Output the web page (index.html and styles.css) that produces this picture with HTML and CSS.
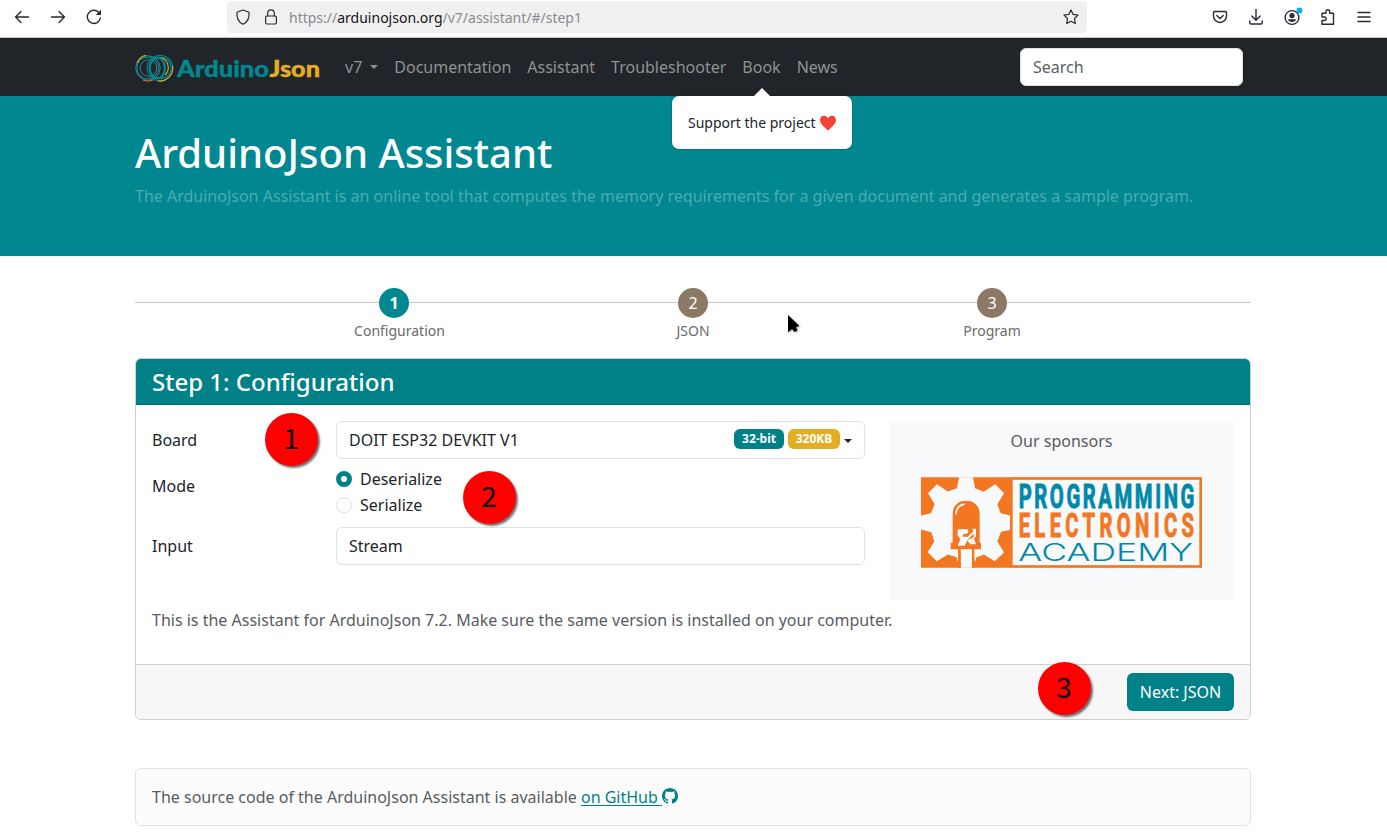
FILE: index.html
```html
<!DOCTYPE html>
<html lang="en">
<head>
<meta charset="utf-8">
<title>ArduinoJson Assistant</title>
<link rel="stylesheet" href="styles.css">
</head>
<body>
<div class="browser">
  <div class="browser-nav">
    <svg class="icon" viewBox="0 0 16 16"><path d="M14.5 8H1.5M7 2.5L1.5 8L7 13.5"/></svg>
    <svg class="icon" viewBox="0 0 16 16"><path d="M1.5 8H14.5M9 2.5L14.5 8L9 13.5"/></svg>
    <svg class="icon" viewBox="0 0 16 16"><path d="M12.600 3.200A6.600 6.600 0 1 0 14.400 9"/><path class="tip" d="M15 .8V6H9.800Z"/></svg>
  </div>
  <div class="urlbar">
    <svg class="icon shield" viewBox="0 0 16 16"><path d="M8 1L14 3.200C14.600 8.500 12.500 13 8 15.300C3.500 13 1.400 8.500 2 3.200Z"/></svg>
    <svg class="icon lock" viewBox="0 0 16 16"><rect x="2.600" y="7" width="10.800" height="8" rx="1.200"/><path d="M4.700 7V4.200A3.300 3.300 0 0 1 11.300 4.200V7"/></svg>
    <span class="url">https://<b>arduinojson.org</b>/v7/assistant/#/step1</span>
    <svg class="icon star" viewBox="0 0 16 16"><path d="M8 1L10.100 5.300L15 6L11.500 9.500L12.300 14.500L8 12.200L3.700 14.500L4.500 9.500L1 6L5.900 5.300Z"/></svg>
  </div>
  <div class="browser-tools">
    <svg class="icon" viewBox="0 0 16 16"><path d="M2.700 2.500H13.300Q14.500 2.500 14.500 3.700V7A6.500 6.500 0 0 1 1.500 7V3.700Q1.500 2.500 2.700 2.500ZM4.800 6.500L8 9.500L11.200 6.500"/></svg>
    <svg class="icon" viewBox="0 0 16 16"><path d="M8 .5V11M3.800 7L8 11.200L12.200 7M1.700 12V13.500Q1.700 15 3.200 15H12.800Q14.300 15 14.300 13.500V12"/></svg>
    <svg class="icon account" viewBox="0 0 16 16"><circle cx="8" cy="8.500" r="6.900"/><circle class="solid" cx="8" cy="6.600" r="2.600"/><path class="solid" d="M4 10.300H12Q11.400 13 8 13Q4.600 13 4 10.300Z"/><circle class="dot" cx="15.500" cy="1.500" r="3"/></svg>
    <svg class="icon" viewBox="0 0 16 16"><path d="M2 15.300V11.500H4.500A1.700 1.700 0 0 0 4.500 8H2V4.300H6V2.500A1.800 1.800 0 0 1 9.600 2.500V4.300H13.500V15.300Z"/></svg>
    <svg class="icon" viewBox="0 0 16 16"><path d="M2 3.500H14M2 8H14M2 12.500H14"/></svg>
  </div>
</div>

<nav class="navbar">
  <svg class="brand" viewBox="0 0 186 32">
    <g class="rings">
      <circle class="sky" cx="13" cy="16" r="12.200"/>
      <circle class="teal" cx="12.800" cy="16" r="10.800"/>
      <circle class="sky" cx="13.500" cy="16" r="8.300"/>
      <path class="gold" d="M2 11Q4.500 4.500 11 3.200"/>
      <path class="red" d="M8 28Q13 30 18 28"/>
      <circle class="teal" cx="25" cy="16" r="12.800"/>
      <circle class="teal" cx="25.500" cy="16" r="10.600"/>
      <path class="gold" d="M24 5.500A9.500 10 0 0 1 30 23M37.500 14A13 13 0 0 1 23 29"/>
      <ellipse class="teal wide" cx="22.300" cy="16" rx="7.600" ry="10.500"/>
    </g>
    <text class="brand-a" x="42" y="24.500" textLength="92" lengthAdjust="spacingAndGlyphs">Arduino</text>
    <text class="brand-j" x="134.500" y="24.500" textLength="50.500" lengthAdjust="spacingAndGlyphs">Json</text>
  </svg>
  <div class="links">
    <span class="dropdown">v7</span>
    <span>Documentation</span>
    <span>Assistant</span>
    <span>Troubleshooter</span>
    <span class="book">Book
      <span class="popover">Support the project
        <svg class="heart" viewBox="0 0 16 16"><path d="M8 15.500C5 12.800 0 9 0 5C0 0 6 -.8 8 3.200C10 -.8 16 0 16 5C16 9 11 12.800 8 15.500Z"/></svg>
      </span>
    </span>
    <span>News</span>
  </div>
  <div class="search">Search</div>
</nav>

<header class="hero">
  <h1>ArduinoJson Assistant</h1>
  <p>The ArduinoJson Assistant is an online tool that computes the memory requirements for a given document and generates a sample program.</p>
</header>

<main class="container">
  <div class="steps">
    <div class="step active"><span class="num">1</span><span class="name">Configuration</span></div>
    <div class="step"><span class="num">2</span><span class="name">JSON</span></div>
    <div class="step"><span class="num">3</span><span class="name">Program</span></div>
  </div>

  <section class="card">
    <h4>Step 1: Configuration</h4>
    <div class="card-body">
      <div class="columns">
        <div class="form">
          <label>Board</label>
          <div class="control">DOIT ESP32 DEVKIT V1
            <span class="tags"><span class="badge">32-bit</span><span class="badge amber">320KB</span><i class="caret"></i></span>
          </div>
          <label>Mode</label>
          <div class="radios">
            <div><i class="radio on"></i>Deserialize</div>
            <div><i class="radio"></i>Serialize</div>
          </div>
          <label>Input</label>
          <div class="control">Stream</div>
        </div>
        <aside class="sponsors">
          <span>Our sponsors</span>
          <svg class="sponsor-logo" viewBox="63 201 843 272">
            <path class="orange" d="M63 201H334V473H63Z"/>
            <path class="paper" d="M177 201H219L225 234L251 245L286 222L312 249L292 282L302 309L334 317V359L303 365L292 394L312 427L284 453L252 433L229 442L225 456L216 418V473H182V418L174 457L170 441L144 433L110 453L83 426L103 394L94 366L63 358V316L93 309L104 282L84 249L111 222L143 244L171 234Z"/>
            <path class="orange" d="M158 398V313C158 287 174 272 198 272C222 272 239 287 239 313V398H243V417H152V398ZM174 410H182V473H174ZM216 410H223V473H216Z"/>
            <path class="paper" d="M173 357H205V369L188 374V380H203L217 365V356H228V379L222 385L228 402H211L202 391L194 407H173L181 387L173 377Z"/>
            <path class="orange" d="M205 357H218V365L202 380L190 373L205 369ZM202 390L221 370V381Z"/>
            <path class="shine" d="M168 313C168 296 176 285 194 282"/>
            <rect class="frame" x="334" y="205" width="568" height="264"/>
            <text class="l1" transform="translate(356 292) scale(.62 1)" textLength="850">PROGRAMMING</text>
            <text class="l2" transform="translate(356 380) scale(.62 1)" textLength="848">ELECTRONICS</text>
            <text class="l3" x="355" y="452" textLength="524" lengthAdjust="spacingAndGlyphs">ACADEMY</text>
          </svg>
        </aside>
      </div>
      <p class="note">This is the Assistant for ArduinoJson 7.2. Make sure the same version is installed on your computer.</p>
    </div>
    <div class="card-footer"><span class="button">Next: JSON</span></div>
    <span class="marker m1">1</span>
    <span class="marker m2">2</span>
    <span class="marker m3">3</span>
  </section>

  <footer class="source">The source code of the ArduinoJson Assistant is available <a>on GitHub </a><svg class="github" viewBox="0 0 16 16"><path d="M8 0C3.580 0 0 3.580 0 8c0 3.540 2.290 6.530 5.470 7.590.4.070.55-.17.55-.38 0-.19-.01-.82-.01-1.490-2.010.37-2.530-.49-2.690-.94-.09-.23-.48-.94-.82-1.130-.28-.15-.68-.52-.01-.53.63-.01 1.080.58 1.230.82.72 1.210 1.870.87 2.330.66.07-.52.28-.87.51-1.070-1.780-.2-3.640-.89-3.640-3.950 0-.87.31-1.590.82-2.150-.08-.2-.36-1.020.08-2.120 0 0 .67-.21 2.200.82.64-.18 1.320-.27 2-.27s1.360.09 2 .27c1.530-1.040 2.200-.82 2.200-.82.44 1.100.16 1.920.08 2.120.51.56.82 1.270.82 2.150 0 3.070-1.870 3.750-3.650 3.950.29.25.54.73.54 1.480 0 1.070-.01 1.930-.01 2.200 0 .21.15.46.55.38A8 8 0 0 0 16 8c0-4.420-3.580-8-8-8z"/></svg></footer>
</main>
<svg class="cursor" viewBox="0 0 14 22"><path d="M1 1V18.500L5 15L7.500 18L10.500 16.500L9 13L12.500 12Z"/></svg>
</body>
</html>
```
FILE: styles.css
```css
* { box-sizing: border-box; }
body {
  margin: 0;
  height: 838px;
  overflow: hidden;
  background: #fff;
  color: #212529;
  font: 16px/24px "Noto Sans", sans-serif;
}
p, h1, h4 { margin: 0; }

.browser {
  display: flex;
  height: 38px;
  border-bottom: 1px solid #c4c4c6;
}
.icon {
  width: 16px;
  height: 16px;
  overflow: visible;
  fill: none;
  stroke: #2b2a33;
  stroke-width: 1.4;
  stroke-linejoin: round;
  stroke-linecap: round;
}
.icon .solid { fill: #2b2a33; }
.icon .tip { fill: #2b2a33; stroke: none; }
.account .solid { stroke: none; }
.dot { fill: #00b3f4; stroke: none; }
.browser-nav {
  display: flex;
  gap: 20px;
  width: 227px;
  padding: 9px 0 0 14px;
}
.urlbar {
  display: flex;
  align-items: center;
  width: 860px;
  height: 32px;
  margin-top: 1px;
  padding: 0 8px;
  border-radius: 4px;
  background: #f0f0f0;
}
.shield, .lock, .star { stroke-width: 1.200; }
.lock { margin: 0 10px 0 12px; }
.url { padding-top: 2px; color: #8b8b8f; font-size: 14px; }
.url b { color: #15141a; font-weight: 400; }
.star { margin-left: auto; }
.browser-tools {
  display: flex;
  gap: 20px;
  padding: 9px 0 0 125px;
}

.navbar {
  display: flex;
  align-items: center;
  height: 58px;
  padding: 0 144px 0 135px;
  background: #212529;
  color: #909294;
}
.brand { width: 186px; height: 32px; margin-top: 2px; }
.rings { fill: none; stroke-width: 1.100; }
.teal { stroke: #00878f; }
.wide { stroke-width: 2.200; }
.sky { stroke: #4f93a1; stroke-width: .8; }
.gold { stroke: #e5ad24; }
.red { stroke: #e47128; }
.brand text { font: 900 22px Lato, sans-serif; stroke-width: .4; }
.brand-a { fill: #00878f; stroke: #00878f; }
.brand-j { fill: #e5ad24; stroke: #e5ad24; }
.links { display: flex; gap: 16px; margin-left: 24px; }
.dropdown::after {
  content: "";
  display: inline-block;
  margin-left: 8px;
  vertical-align: 4px;
  border: 4.500px solid transparent;
  border-top-color: currentColor;
  border-bottom: 0;
}
.book { position: relative; }
.popover {
  position: absolute;
  top: 41px;
  left: 50%;
  z-index: 2;
  display: flex;
  align-items: center;
  gap: 4px;
  width: 180px;
  height: 53px;
  padding: 0 15px 0 16.500px;
  transform: translateX(-50%);
  border-radius: 7px;
  background: #fff;
  box-shadow: 0 0 0 1px rgba(0, 0, 0, .12);
  color: #212529;
  font-size: 14px;
  white-space: nowrap;
}
.popover::before {
  content: "";
  position: absolute;
  top: -8px;
  left: calc(50% - 8px);
  border: 8px solid transparent;
  border-top: 0;
  border-bottom-color: #fff;
}
.heart { width: 16px; height: 16px; fill: #f44336; }
.search {
  width: 223px;
  height: 38px;
  margin-left: auto;
  padding: 6px 12px;
  border: 1px solid #dee2e6;
  border-radius: 6px;
  background: #fff;
  color: #5a5e62;
}

.hero {
  height: 160px;
  padding: 33px 135px 0;
  background: #00878f;
  color: #fff;
}
.hero h1 { margin-bottom: 7px; font-size: 40px; font-weight: 500; line-height: 48px; }
.hero p { color: #4dabb1; white-space: nowrap; }

.container { width: 1116px; margin-left: 135px; }
.steps {
  display: grid;
  grid-template-columns: repeat(3, 299px);
  justify-content: center;
  height: 102px;
  padding-top: 32px;
  background: linear-gradient(#c8c8c8, #c8c8c8) 0 46px / 100% 1px no-repeat;
}
.step { display: flex; flex-direction: column; align-items: center; }
.num {
  width: 30px;
  height: 30px;
  border-radius: 50%;
  background: #8c7965;
  color: #fff;
  line-height: 30px;
  text-align: center;
}
.name { margin-top: 2px; color: #6b6b6b; font-size: 14px; line-height: 21px; }
.active .num { background: #00878f; font-weight: 700; }
.active .name { margin-left: 11px; }

.card {
  position: relative;
  height: 362px;
  border: 1px solid #cfcfcf;
  border-radius: 6px;
  display: flex;
  flex-direction: column;
}
.card h4 {
  height: 46px;
  padding: 8px 16px;
  border-bottom: 1px solid #006f74;
  border-radius: 5px 5px 0 0;
  background: #008187;
  color: #fff;
  font-size: 24px;
  font-weight: 500;
  line-height: 29px;
}
.card-body { flex: 1; padding: 16px 16px 0; }
.columns { display: flex; justify-content: space-between; }
.form {
  display: grid;
  grid-template-columns: 184px 529px;
  row-gap: 8px;
  align-content: start;
}
.form label { padding-top: 7px; }
.control {
  display: flex;
  justify-content: space-between;
  height: 38px;
  padding: 6px 12px;
  border: 1px solid #dee2e6;
  border-radius: 6px;
}
.tags { display: flex; align-items: center; gap: 4px; margin-top: -3px; }
.badge {
  width: 50px;
  height: 20px;
  border-radius: 6px;
  background: #008187;
  color: #fff;
  font-size: 12px;
  font-weight: 700;
  line-height: 20px;
  text-align: center;
}
.amber { width: 52px; background: #e5ad24; }
.caret {
  margin-top: 4px;
  border: 4px solid transparent;
  border-top-color: #212529;
  border-bottom: 0;
}
.radios { height: 52px; }
.radios div { display: flex; align-items: center; gap: 8px; height: 26px; }
.radios div:first-child { height: 24px; margin-bottom: 1px; }
.radio {
  width: 16px;
  height: 16px;
  border: 1px solid #dee2e6;
  border-radius: 50%;
}
.radio.on { border: 5px solid #008187; }
.sponsors {
  display: flex;
  flex-direction: column;
  align-items: center;
  gap: 24px;
  width: 345px;
  height: 179px;
  padding-top: 8px;
  background: #f8f9fa;
  color: #595c5f;
}
.sponsor-logo { width: 281px; height: 91px; }
.orange { fill: #f37721; }
.paper { fill: #f8f9fa; }
.frame { fill: none; stroke: #f37721; stroke-width: 8; }
.shine { fill: none; stroke: #f8f9fa; stroke-width: 5; }
.l1, .l2 { font: 700 98px Roboto, sans-serif; stroke-width: 3; }
.l1 { fill: #0088a9; stroke: #0088a9; }
.l2 { fill: #f37721; stroke: #f37721; }
.l3 { fill: #0088a9; font: 300 73px Inter, sans-serif; }
.note { margin-top: 8px; color: #595c5f; }
.card-footer {
  display: flex;
  justify-content: flex-end;
  height: 55px;
  padding: 8px 16px;
  border-top: 1px solid #cfcfcf;
  border-radius: 0 0 5px 5px;
  background: #f7f7f7;
}
.button {
  width: 107px;
  height: 38px;
  border-radius: 6px;
  background: #008187;
  color: #fff;
  line-height: 38px;
  text-align: center;
}
.marker {
  position: absolute;
  width: 53px;
  height: 53px;
  border-radius: 50%;
  background: #f00;
  box-shadow: 2px 2px 2px rgba(0, 0, 0, .55);
  color: #000;
  font: 28px/49px "Noto Sans CJK SC", sans-serif;
  text-align: center;
}
.m1 { left: 128.5px; top: 53.5px; }
.m2 { left: 326.5px; top: 111.5px; }
.m3 { left: 901.5px; top: 302.5px; }

.source {
  height: 58px;
  margin-top: 48px;
  padding: 16px;
  border: 1px solid #dee2e6;
  border-radius: 6px;
  background: #fcfcfc;
  color: #595c5f;
}
.source a { color: #008187; text-decoration: underline; white-space: pre; text-underline-offset: 2px; }
.github { width: 16px; height: 16px; fill: #008187; vertical-align: -1px; }
.cursor {
  position: absolute;
  left: 787px;
  top: 314px;
  width: 14px;
  height: 22px;
  filter: drop-shadow(1px 1px 1px rgba(0, 0, 0, .3));
}
```
